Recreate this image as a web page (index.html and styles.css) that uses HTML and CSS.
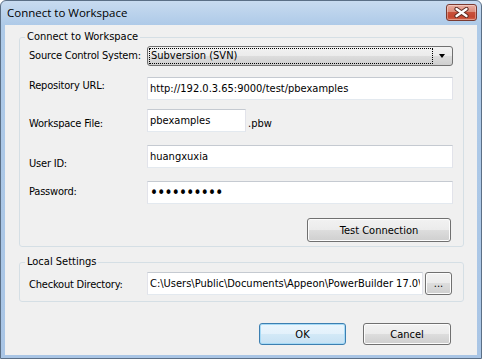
FILE: index.html
```html
<!DOCTYPE html>
<html lang="en">

<head>
    <meta charset="UTF-8">
    <title>Connect to Workspace</title>
    <link rel="stylesheet" href="styles.css">
</head>

<body>

    <div class="window">
        <div class="titlebar">
            <span class="title">Connect to Workspace</span>
            <button class="close-btn" title="Close">
                <svg width="15" height="11" viewBox="0 0 15 11">
                    <path d="M2.5 2 L12.5 9 M12.5 2 L2.5 9" stroke="#5a2a22" stroke-width="4.2" stroke-linecap="round" fill="none" />
                    <path d="M2.5 2 L12.5 9 M12.5 2 L2.5 9" stroke="#ffffff" stroke-width="2.3" stroke-linecap="round" fill="none" />
                </svg>
            </button>
        </div>

        <div class="client">
            <fieldset class="group group-connect">
                <legend>Connect to Workspace</legend>

                <div class="row row-source">
                    <label class="field-label">Source Control System:</label>
                    <div class="combo">
                        <span class="combo-focus">Subversion (SVN)</span>
                        <span class="combo-arrow"></span>
                    </div>
                </div>

                <div class="row row-url">
                    <label class="field-label" for="url">Repository URL:</label>
                    <input class="textbox" id="url" value="http://192.0.3.65:9000/test/pbexamples">
                </div>

                <div class="row row-workspace">
                    <label class="field-label" for="workspace">Workspace File:</label>
                    <input class="textbox textbox-short" id="workspace" value="pbexamples">
                    <span class="suffix">.pbw</span>
                </div>

                <div class="row row-user">
                    <label class="field-label" for="user">User ID:</label>
                    <input class="textbox" id="user" value="huangxuxia">
                </div>

                <div class="row row-password">
                    <label class="field-label" for="password">Password:</label>
                    <input class="textbox textbox-password" id="password" type="password" value="xxxxxxxxxx">
                </div>

                <div class="row row-test">
                    <button class="win-btn test-btn">Test Connection</button>
                </div>
            </fieldset>

            <fieldset class="group group-local">
                <legend>Local Settings</legend>

                <div class="row row-checkout">
                    <label class="field-label" for="checkout">Checkout Directory:</label>
                    <input class="textbox textbox-dir" id="checkout" value="C:\Users\Public\Documents\Appeon\PowerBuilder 17.0\Workspace">
                    <button class="win-btn browse-btn">...</button>
                </div>
            </fieldset>

            <div class="actions">
                <button class="win-btn ok-btn">OK</button>
                <button class="win-btn cancel-btn">Cancel</button>
            </div>
        </div>
    </div>

</body>

</html>
```

FILE: styles.css
```css
body {
    margin: 0;
    font-family: "DejaVu Sans Condensed", "Liberation Sans", sans-serif;
    font-size: 11px;
    color: #000;
    background-color: #ffffff;
}

.window {
    width: 482px;
    height: 359px;
    box-sizing: border-box;
    border: 1px solid #5b6f86;
    border-radius: 6px 6px 0 0;
    background: linear-gradient(#c8dbf0, #aecae8 24px, #a9c5e5);
    display: flex;
    flex-direction: column;
    overflow: hidden;
}

/* title bar */

.titlebar {
    height: 24px;
    flex: none;
    display: flex;
    justify-content: space-between;
    align-items: flex-start;
    padding: 0 4px 0 6px;
}

.title {
    font-family: "Open Sans", sans-serif;
    font-size: 11.5px;
    line-height: 16px;
    margin-top: 4px;
    color: #000;
}

.close-btn {
    width: 31px;
    height: 17px;
    margin-top: 3px;
    padding: 0;
    border: 1px solid #7b3a30;
    border-radius: 3px;
    background: linear-gradient(#e9ada0, #dc8e7c 45%, #c8503a 50%, #c4462f 80%, #d6694f);
    box-shadow: inset 0 0 0 1px rgba(255, 255, 255, 0.35);
    display: flex;
    align-items: center;
    justify-content: center;
}

/* client area */

.client {
    height: 330px;
    margin: 0 4px 3px 4px;
    box-sizing: border-box;
    padding: 5px 13px 0 14px;
    background-color: #f0f0f0;
}

.group {
    margin: 0;
    min-width: 0;
    border: 1px solid #d5dfe5;
    border-radius: 3px;
    padding: 2px 10px 4px 9px;
}

.group legend {
    padding: 0 2px;
    margin-left: -4px;
    line-height: 14px;
}

.group-local {
    margin-top: 8px;
    padding-top: 3px;
    padding-bottom: 6px;
}

.row {
    display: flex;
    align-items: flex-start;
}

.field-label {
    width: 118px;
    flex: none;
    line-height: 13px;
    letter-spacing: -0.2px;
}

.row-source .field-label { padding-top: 3px; }
.row-url { margin-top: 11px; }
.row-url .field-label { padding-top: 2px; }
.row-workspace { margin-top: 9px; }
.row-workspace .field-label { padding-top: 8px; }
.row-user { margin-top: 13px; }
.row-user .field-label { padding-top: 12px; margin-bottom: -2px; }
.row-password { margin-top: 13px; }
.row-password .field-label { padding-top: 4px; }
.row-test { margin-top: 14px; justify-content: flex-end; }
.row-checkout .field-label { padding-top: 6px; }

/* combo box */

.combo {
    flex: 1;
    height: 20px;
    box-sizing: border-box;
    border: 1px solid #707070;
    border-radius: 3px;
    background: linear-gradient(#f2f2f2, #ebebeb 50%, #dddddd 50%, #cfcfcf);
    display: flex;
}

.combo-focus {
    flex: 1;
    margin: 1px 0 1px 1px;
    padding-left: 1px;
    border: 1px dotted #000;
    line-height: 14px;
}

.combo-arrow {
    width: 19px;
    position: relative;
}

.combo-arrow::after {
    content: "";
    position: absolute;
    left: 6px;
    top: 7px;
    border-left: 3.5px solid transparent;
    border-right: 3.5px solid transparent;
    border-top: 4px solid #000;
}

/* text boxes */

.textbox {
    flex: 1;
    min-width: 0;
    height: 23px;
    box-sizing: border-box;
    margin: 0;
    padding: 0 2px;
    border: 1px solid;
    border-color: #c5cad1 #e2e3ea #e3e9ef #e2e3ea;
    background-color: #fff;
    font: inherit;
    color: #000;
    outline: none;
}

.textbox-short {
    flex: none;
    width: 99px;
}

.textbox-dir {
    flex: none;
    width: 276px;
}

.textbox-password {
    font-size: 15px;
    letter-spacing: -0.7px;
}

.suffix {
    margin-left: 2px;
    padding-top: 8px;
    line-height: 13px;
}

/* buttons */

.win-btn {
    height: 22px;
    box-sizing: border-box;
    padding: 0;
    border: 1px solid #707070;
    border-radius: 3px;
    background: linear-gradient(#f2f2f2, #ebebeb 50%, #dddddd 50%, #cfcfcf);
    box-shadow: inset 0 0 0 1px #fcfcfc;
    font: inherit;
    color: #000;
}

.test-btn {
    width: 144px;
    height: 24px;
    margin-right: 2px;
}

.browse-btn {
    width: 27px;
    height: 23px;
    margin-left: 2px;
}

.actions {
    display: flex;
    justify-content: flex-end;
    margin-top: 21px;
    padding-right: 13px;
}

.ok-btn {
    width: 87px;
    border-color: #3c7fb1;
    box-shadow: inset 0 0 0 1px #a6daf6;
    background: linear-gradient(#eaf6fd, #e3f1fb 50%, #d3e9f7 50%, #c7e1f3);
}

.cancel-btn {
    width: 88px;
    margin-left: 17px;
}
```
